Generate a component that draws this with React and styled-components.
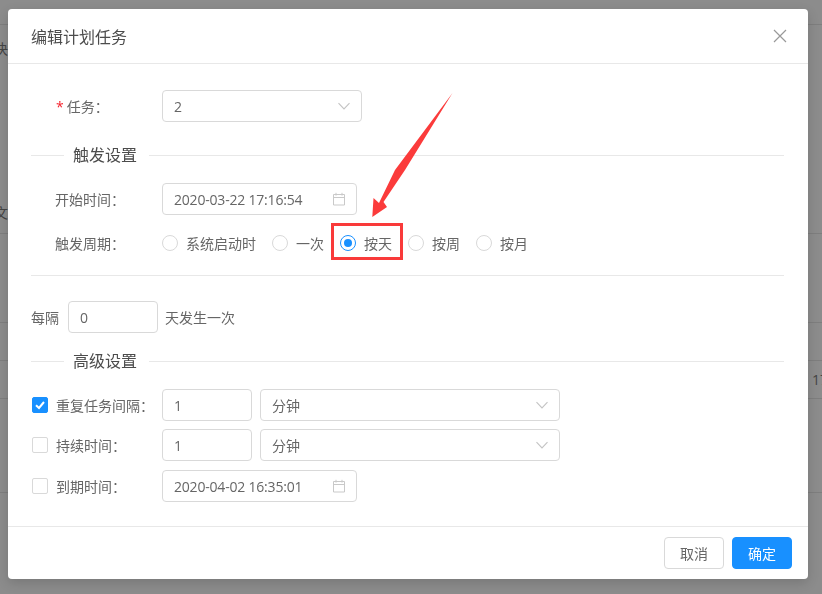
import React from 'react';
import styled, { createGlobalStyle } from 'styled-components';

const GlobalStyle = createGlobalStyle`
  html, body {
    margin: 0;
    padding: 0;
    height: 100%;
    overflow: hidden;
    font-family: "Open Sans", "Noto Sans CJK SC", sans-serif;
    font-size: 14px;
  }
`;

// Page behind the modal
const Backdrop = styled.div`
  width: 822px;
  height: 594px;
  background: #8c8c8c;
  display: flex;
  flex-direction: column;
`;

const BackRow = styled.div`
  height: ${p => p.$h}px;
  box-sizing: border-box;
  border-bottom: ${p => (p.$line ? '1px solid #7e7e7e' : 'none')};
  padding-bottom: ${p => p.$pb || 0}px;
  display: flex;
  align-items: ${p => (p.$pb ? 'flex-end' : 'center')};
  justify-content: ${p => (p.$right ? 'flex-end' : 'flex-start')};
  color: #444;
  font-size: 14px;
  overflow: hidden;
  white-space: nowrap;
`;

const BackText = styled.span`
  margin-left: ${p => (p.$right ? 0 : -6)}px;
  margin-right: ${p => (p.$right ? -6 : 0)}px;
`;

const Modal = styled.div`
  position: fixed;
  left: 8px;
  top: 9px;
  width: 800px;
  height: 570px;
  background: #fff;
  border-radius: 4px;
  box-shadow: 0 4px 12px rgba(0, 0, 0, 0.15);
  display: flex;
  flex-direction: column;
  color: #666;
`;

const Header = styled.div`
  height: 55px;
  box-sizing: border-box;
  border-bottom: 1px solid #e8e8e8;
  padding: 0 23px;
  display: flex;
  align-items: center;
  justify-content: space-between;
  font-size: 16px;
  color: #4c4c4c;
`;

const CloseButton = styled.span`
  display: flex;
  color: #999;
  margin-right: -2px;
`;

const Body = styled.div`
  flex: 1;
  padding: 26px 24px 0 23px;
`;

const Row = styled.div`
  display: flex;
  align-items: center;
  height: 32px;
  margin-top: ${p => p.$mt || 0}px;
`;

const Label = styled.label`
  width: 131px;
  flex: none;
  box-sizing: border-box;
  padding-left: ${p => p.$indent || 24}px;
  font-size: 14px;
  white-space: nowrap;
`;

const Star = styled.span`
  color: #f5222d;
  margin-right: 3px;
  font-size: 14px;
`;

const Field = styled.div`
  box-sizing: border-box;
  width: ${p => p.$w}px;
  height: 32px;
  flex: none;
  margin-left: ${p => p.$ml || 0}px;
  margin-right: ${p => p.$mr || 0}px;
  border: 1px solid #d9d9d9;
  border-radius: 4px;
  padding: 0 10px;
  display: flex;
  align-items: center;
  justify-content: space-between;
  font-size: 14px;
`;

const FieldText = styled.span`
  margin-left: 1px;
  letter-spacing: ${p => (p.$tight ? '-0.2px' : 'normal')};
`;

const Section = styled.div`
  display: flex;
  align-items: center;
  height: 24px;
  margin-top: ${p => p.$mt}px;
  font-size: 16px;
  color: #4c4c4c;

  &::before {
    content: '';
    width: 33px;
    height: 1px;
    background: #e8e8e8;
    margin-right: 9px;
  }

  &::after {
    content: '';
    flex: 1;
    height: 1px;
    background: #e8e8e8;
    margin-left: 12px;
  }
`;

const SectionTitle = styled.span`
  padding-bottom: 2px;
`;

const Rule = styled.div`
  height: 1px;
  background: #e8e8e8;
  margin-top: ${p => p.$mt}px;
`;

const RadioGroup = styled.div`
  display: flex;
  align-items: center;
  gap: 16px;
`;

const RadioItem = styled.span`
  display: flex;
  align-items: center;
  gap: 8px;
  white-space: nowrap;
`;

const RadioDot = styled.span`
  box-sizing: border-box;
  width: 16px;
  height: 16px;
  border-radius: 50%;
  border: 1px solid ${p => (p.$on ? '#1890ff' : '#d9d9d9')};
  display: flex;
  align-items: center;
  justify-content: center;

  &::after {
    content: '';
    display: ${p => (p.$on ? 'block' : 'none')};
    width: 8px;
    height: 8px;
    border-radius: 50%;
    background: #1890ff;
  }
`;

const PlainText = styled.span`
  margin-right: ${p => p.$mr || 0}px;
  white-space: nowrap;
`;

const CheckLabel = styled.label`
  width: 131px;
  flex: none;
  box-sizing: border-box;
  padding-left: 1px;
  display: flex;
  align-items: center;
  gap: 8px;
  white-space: nowrap;
`;

const CheckBox = styled.span`
  box-sizing: border-box;
  width: 16px;
  height: 16px;
  border-radius: 2px;
  border: 1px solid ${p => (p.$on ? '#1890ff' : '#d9d9d9')};
  background: ${p => (p.$on ? '#1890ff' : '#fff')};
  display: flex;
  align-items: center;
  justify-content: center;
`;

const Footer = styled.div`
  height: 53px;
  box-sizing: border-box;
  border-top: 1px solid #e8e8e8;
  padding: 0 16px;
  display: flex;
  align-items: center;
  justify-content: flex-end;
  gap: 8px;
`;

const Button = styled.button`
  width: 60px;
  height: 32px;
  box-sizing: border-box;
  border-radius: 4px;
  border: 1px solid ${p => (p.$primary ? '#1890ff' : '#d9d9d9')};
  background: ${p => (p.$primary ? '#1890ff' : '#fff')};
  color: ${p => (p.$primary ? '#fff' : '#666')};
  font-family: inherit;
  font-size: 14px;
  padding: 0;
`;

// Annotations drawn on top of the screenshot
const RedBox = styled.div`
  position: fixed;
  left: 331px;
  top: 223px;
  width: 72px;
  height: 37px;
  box-sizing: border-box;
  border: 3px solid #f93a3a;
`;

const Arrow = styled.svg`
  position: fixed;
  left: 360px;
  top: 85px;
`;

const Chevron = () => (
  <svg width="14" height="14" viewBox="0 0 14 14" fill="none" stroke="#c4c4c4" strokeWidth="1.1">
    <path d="M1.5 4.2 7 10l5.5-5.8" />
  </svg>
);

const Calendar = () => (
  <svg width="14" height="14" viewBox="0 0 14 14" fill="none" stroke="#c9c9c9" strokeWidth="1">
    <path d="M1.5 2.5h11v10.5h-11zM1.5 5.5h11M4 .8v2.8M10 .8v2.8" />
  </svg>
);

const Select = ({ w, ml, value }) => (
  <Field $w={w} $ml={ml}>
    <FieldText>{value}</FieldText>
    <Chevron />
  </Field>
);

const DateField = ({ value }) => (
  <Field $w={195}>
    <FieldText $tight>{value}</FieldText>
    <Calendar />
  </Field>
);

const radios = ['系统启动时', '一次', '按天', '按周', '按月'];

export default function App() {
  return (
    <>
      <GlobalStyle />
      <Backdrop>
        <BackRow $h={25} $line />
        <BackRow $h={46}><BackText>决</BackText></BackRow>
        <BackRow $h={163} $line $pb={11}><BackText>文</BackText></BackRow>
        <BackRow $h={89} $line />
        <BackRow $h={38} $line />
        <BackRow $h={38} $line $right><BackText $right>17</BackText></BackRow>
        <BackRow $h={94} $line />
      </Backdrop>

      <Modal>
        <Header>
          编辑计划任务
          <CloseButton>
            <svg width="14" height="14" viewBox="0 0 14 14" stroke="currentColor" strokeWidth="1.2" fill="none">
              <path d="M1 1l12 12M13 1 1 13" />
            </svg>
          </CloseButton>
        </Header>

        <Body>
          <Row>
            <Label $indent={25}><Star>*</Star>任务：</Label>
            <Select w={200} value="2" />
          </Row>

          <Section $mt={21}><SectionTitle>触发设置</SectionTitle></Section>

          <Row $mt={16}>
            <Label>开始时间：</Label>
            <DateField value="2020-03-22 17:16:54" />
          </Row>

          <Row $mt={12}>
            <Label>触发周期：</Label>
            <RadioGroup>
              {radios.map(r => (
                <RadioItem key={r}>
                  <RadioDot $on={r === '按天'} />
                  {r}
                </RadioItem>
              ))}
            </RadioGroup>
          </Row>

          <Rule $mt={16} />

          <Row $mt={25}>
            <PlainText $mr={9}>每隔</PlainText>
            <Field $w={90} $mr={7}><FieldText>0</FieldText></Field>
            <PlainText>天发生一次</PlainText>
          </Row>

          <Section $mt={16}><SectionTitle>高级设置</SectionTitle></Section>

          <Row $mt={16}>
            <CheckLabel>
              <CheckBox $on>
                <svg width="12" height="12" viewBox="0 0 12 12" fill="none" stroke="#fff" strokeWidth="2">
                  <path d="M2 6.2 5 9l5-6" />
                </svg>
              </CheckBox>
              重复任务间隔：
            </CheckLabel>
            <Field $w={90}><FieldText>1</FieldText></Field>
            <Select w={300} ml={8} value="分钟" />
          </Row>

          <Row $mt={8}>
            <CheckLabel><CheckBox />持续时间：</CheckLabel>
            <Field $w={90}><FieldText>1</FieldText></Field>
            <Select w={300} ml={8} value="分钟" />
          </Row>

          <Row $mt={9}>
            <CheckLabel><CheckBox />到期时间：</CheckLabel>
            <DateField value="2020-04-02 16:35:01" />
          </Row>
        </Body>

        <Footer>
          <Button>取消</Button>
          <Button $primary>确定</Button>
        </Footer>
      </Modal>

      <Arrow width="100" height="140" viewBox="360 85 100 140">
        <path d="M452.5 93 405 170 383.5 202 387 207 372.3 217 373.5 198 379 203 395 170Z" fill="#fb3b3b" />
      </Arrow>
      <RedBox />
    </>
  );
}
